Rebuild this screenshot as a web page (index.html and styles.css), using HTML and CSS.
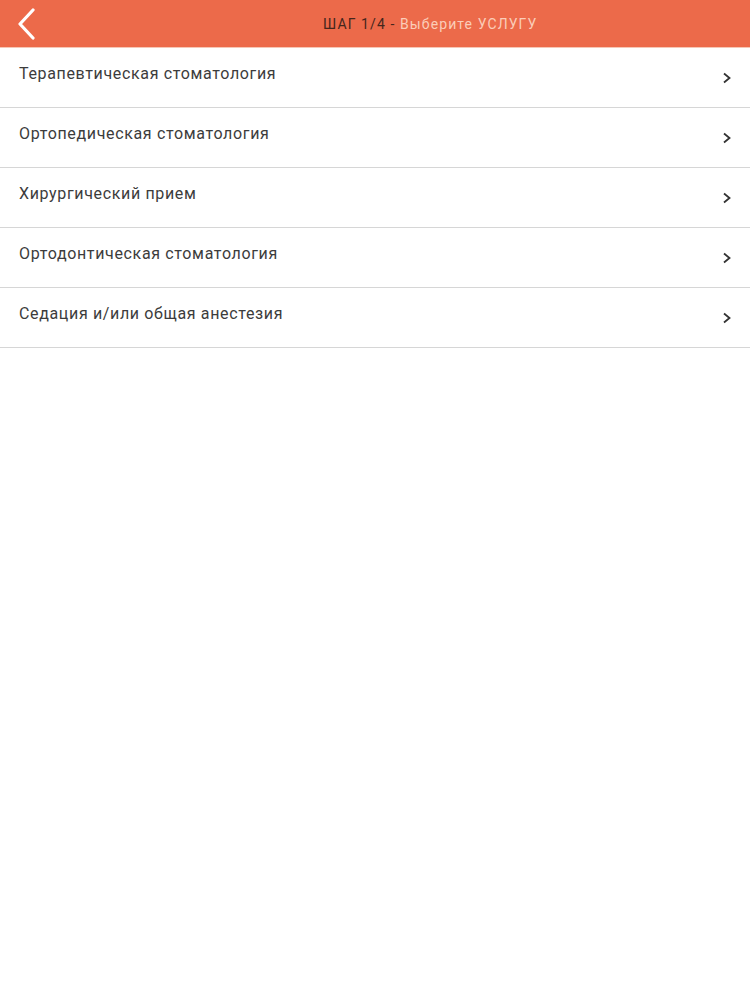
FILE: index.html
```html
<!DOCTYPE html>
<html lang="ru">
<head>
<meta charset="utf-8">
<link rel="stylesheet" href="styles.css">
</head>
<body>
<header class="topbar">
  <div class="back">
    <svg width="22" height="32" viewBox="0 0 22 32"><path d="M18 2 L5 16 L18 30" fill="none" stroke="#fff" stroke-width="3.2" stroke-linecap="round" stroke-linejoin="round"/></svg>
  </div>
  <div class="title"><span class="step">ШАГ 1/4 -</span> <span class="hint">Выберите УСЛУГУ</span></div>
</header>
<ul class="list">
  <li class="item"><span class="label">Терапевтическая стоматология</span><span class="chev"><svg width="10" height="12" viewBox="0 0 10 12"><path d="M2 1.5 L7.5 6 L2 10.5" fill="none" stroke="#333" stroke-width="1.8"/></svg></span></li>
  <li class="item"><span class="label">Ортопедическая стоматология</span><span class="chev"><svg width="10" height="12" viewBox="0 0 10 12"><path d="M2 1.5 L7.5 6 L2 10.5" fill="none" stroke="#333" stroke-width="1.8"/></svg></span></li>
  <li class="item"><span class="label">Хирургический прием</span><span class="chev"><svg width="10" height="12" viewBox="0 0 10 12"><path d="M2 1.5 L7.5 6 L2 10.5" fill="none" stroke="#333" stroke-width="1.8"/></svg></span></li>
  <li class="item"><span class="label">Ортодонтическая стоматология</span><span class="chev"><svg width="10" height="12" viewBox="0 0 10 12"><path d="M2 1.5 L7.5 6 L2 10.5" fill="none" stroke="#333" stroke-width="1.8"/></svg></span></li>
  <li class="item"><span class="label">Седация и/или общая анестезия</span><span class="chev"><svg width="10" height="12" viewBox="0 0 10 12"><path d="M2 1.5 L7.5 6 L2 10.5" fill="none" stroke="#333" stroke-width="1.8"/></svg></span></li>
</ul>
</body>
</html>
```
FILE: styles.css
```css
html, body {
  margin: 0;
  padding: 0;
  background: #fff;
  font-family: Roboto, "Liberation Sans", sans-serif;
}
.topbar {
  height: 47px;
  background: #ec6a4a;
  border-bottom: 1px solid #f6c7b6;
  display: flex;
  align-items: center;
}
.back {
  width: 50px;
  display: flex;
  justify-content: center;
  padding-left: 2px;
  box-sizing: border-box;
}
.back svg { display: block; }
.title {
  margin-left: 273px;
  font-size: 14px;
  letter-spacing: 1.1px;
  white-space: nowrap;
}
.step { color: #45261d; }
.hint { color: #fbcdb9; }
.list {
  list-style: none;
  margin: 0;
  padding: 0;
}
.item {
  height: 59px;
  border-bottom: 1px solid #d6d6d6;
  display: flex;
  align-items: center;
  justify-content: space-between;
  padding: 0 18px 0 19px;
}
.label {
  font-size: 16px;
  letter-spacing: 0.65px;
  color: #3c3c3c;
  margin-bottom: 9px;
}
.chev svg { display: block; }
```
